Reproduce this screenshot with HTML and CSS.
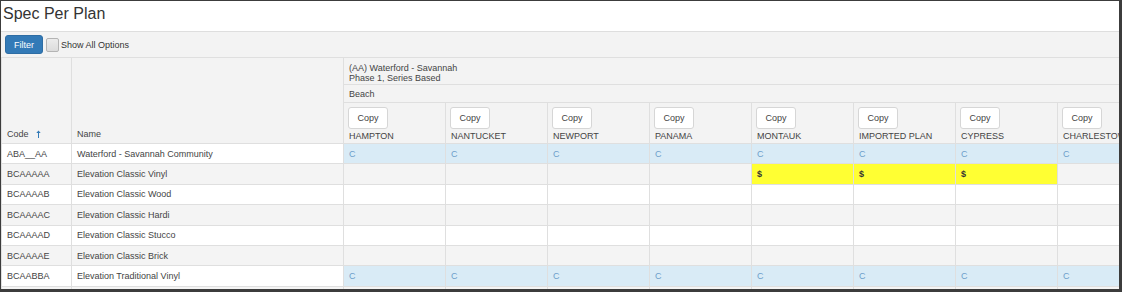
FILE: index.html
```
<!DOCTYPE html>
<html>
<head>
    <meta charset="UTF-8">
    <title>Spec Per Plan</title>
    <link rel="stylesheet" href="styles.css">
</head>
<body>
    <div class="frame">
        <h1 class="page-title">Spec Per Plan</h1>
        <div class="toolbar">
            <button class="btn-filter">Filter</button>
            <label class="option"><span class="check"></span>Show All Options</label>
        </div>
        <div class="grid-wrap">
            <table class="spec-table">
                <colgroup>
                    <col class="w-code">
                    <col class="w-name">
                    <col class="w-plan"><col class="w-plan"><col class="w-plan"><col class="w-plan">
                    <col class="w-plan"><col class="w-plan"><col class="w-plan"><col class="w-plan">
                </colgroup>
                <thead>
                    <tr class="row-community">
                        <th rowspan="3" class="head-fixed">Code
                            <svg class="sort-up" width="5" height="8" viewBox="0 0 5 8"><path d="M2.5 0.5 L0.3 3 H2 V8 H3 V3 H4.7 Z" fill="#337ab7"/></svg>
                        </th>
                        <th rowspan="3" class="head-fixed">Name</th>
                        <th colspan="8" class="community">(AA) Waterford - Savannah<br>Phase 1, Series Based</th>
                    </tr>
                    <tr class="row-series">
                        <th colspan="8">Beach</th>
                    </tr>
                    <tr class="row-plans">
                        <th><button class="btn-copy">Copy</button><div>HAMPTON</div></th>
                        <th><button class="btn-copy">Copy</button><div>NANTUCKET</div></th>
                        <th><button class="btn-copy">Copy</button><div>NEWPORT</div></th>
                        <th><button class="btn-copy">Copy</button><div>PANAMA</div></th>
                        <th><button class="btn-copy">Copy</button><div>MONTAUK</div></th>
                        <th><button class="btn-copy">Copy</button><div>IMPORTED PLAN</div></th>
                        <th><button class="btn-copy">Copy</button><div>CYPRESS</div></th>
                        <th><button class="btn-copy">Copy</button><div>CHARLESTOWN</div></th>
                    </tr>
                </thead>
                <tbody>
                    <tr>
                        <td>ABA__AA</td><td>Waterford - Savannah Community</td>
                        <td class="c">C</td><td class="c">C</td><td class="c">C</td><td class="c">C</td>
                        <td class="c">C</td><td class="c">C</td><td class="c">C</td><td class="c">C</td>
                    </tr>
                    <tr>
                        <td>BCAAAAA</td><td>Elevation Classic Vinyl</td>
                        <td></td><td></td><td></td><td></td>
                        <td class="s">$</td><td class="s">$</td><td class="s">$</td><td></td>
                    </tr>
                    <tr>
                        <td>BCAAAAB</td><td>Elevation Classic Wood</td>
                        <td></td><td></td><td></td><td></td><td></td><td></td><td></td><td></td>
                    </tr>
                    <tr>
                        <td>BCAAAAC</td><td>Elevation Classic Hardi</td>
                        <td></td><td></td><td></td><td></td><td></td><td></td><td></td><td></td>
                    </tr>
                    <tr>
                        <td>BCAAAAD</td><td>Elevation Classic Stucco</td>
                        <td></td><td></td><td></td><td></td><td></td><td></td><td></td><td></td>
                    </tr>
                    <tr>
                        <td>BCAAAAE</td><td>Elevation Classic Brick</td>
                        <td></td><td></td><td></td><td></td><td></td><td></td><td></td><td></td>
                    </tr>
                    <tr>
                        <td>BCAABBA</td><td>Elevation Traditional Vinyl</td>
                        <td class="c">C</td><td class="c">C</td><td class="c">C</td><td class="c">C</td>
                        <td class="c">C</td><td class="c">C</td><td class="c">C</td><td class="c">C</td>
                    </tr>
                    <tr>
                        <td></td><td></td>
                        <td></td><td></td><td></td><td></td><td></td><td></td><td></td><td></td>
                    </tr>
                </tbody>
            </table>
        </div>
    </div>
</body>
</html>
```

FILE: styles.css
```
body {
    margin: 0;
    background: #fff;
    font-family: "Liberation Sans", Arial, sans-serif;
}
.frame {
    width: 1122px;
    height: 292px;
    box-sizing: border-box;
    border: solid #3c3c3c;
    border-width: 1px 3px 3px 1px;
    overflow: hidden;
}
.page-title {
    margin: 0;
    height: 30px;
    box-sizing: border-box;
    padding: 3px 0 0 2px;
    font-size: 16px;
    line-height: 20px;
    font-weight: normal;
    color: #333;
}
.toolbar {
    height: 26px;
    box-sizing: border-box;
    padding: 3px 4px 0;
    border-top: 1px solid #dedede;
    background: #f3f3f3;
    display: flex;
    align-items: flex-start;
}
.btn-filter {
    width: 38px;
    height: 19px;
    padding: 0;
    border: 1px solid #2e6da4;
    border-radius: 3px;
    background: #337ab7;
    color: #fff;
    font-family: inherit;
    font-size: 9px;
}
.option {
    display: flex;
    align-items: center;
    height: 19px;
    margin-left: 3px;
    font-size: 9px;
    color: #333;
}
.check {
    width: 11px;
    height: 12px;
    margin-right: 2px;
    border: 1px solid #b4b4b4;
    border-radius: 2px;
    background: linear-gradient(#ececec, #dcdcdc);
}
.grid-wrap {
    overflow: hidden;
}
.spec-table {
    width: 1158px;
    table-layout: fixed;
    border-collapse: collapse;
    font-size: 9px;
    line-height: 10px;
    color: #444;
}
.w-code { width: 70px; }
.w-name { width: 272px; }
.w-plan { width: 102px; }
.spec-table th,
.spec-table td {
    border: 1px solid #dfdfdf;
    padding: 0 5px;
    text-align: left;
    white-space: nowrap;
    overflow: hidden;
}
.spec-table thead th {
    background: #f3f3f3;
    font-weight: normal;
}
.head-fixed {
    vertical-align: bottom;
    padding-bottom: 4px !important;
}
.sort-up {
    margin-left: 5px;
    vertical-align: -1px;
}
.row-community { height: 27px; }
.community {
    vertical-align: top;
    padding-top: 5px !important;
}
.row-series { height: 18px; }
.row-plans { height: 41px; }
.row-plans th {
    vertical-align: top;
    padding-top: 4px !important;
}
.btn-copy {
    display: block;
    width: 40px;
    height: 22px;
    margin: 0 0 2px -1px;
    padding: 0;
    border: 1px solid #d6d6d6;
    border-radius: 3px;
    background: #fff;
    color: #444;
    font-family: inherit;
    font-size: 9px;
}
.spec-table tbody tr { height: 20.4px; }
.spec-table tbody tr:nth-child(even) td { background: #f4f4f4; }
.spec-table tbody tr td.c {
    background: #d9ebf6;
    color: #6c9ecb;
}
.spec-table tbody tr td.s {
    background: #ffff33;
    color: #333;
    font-weight: bold;
}
```
